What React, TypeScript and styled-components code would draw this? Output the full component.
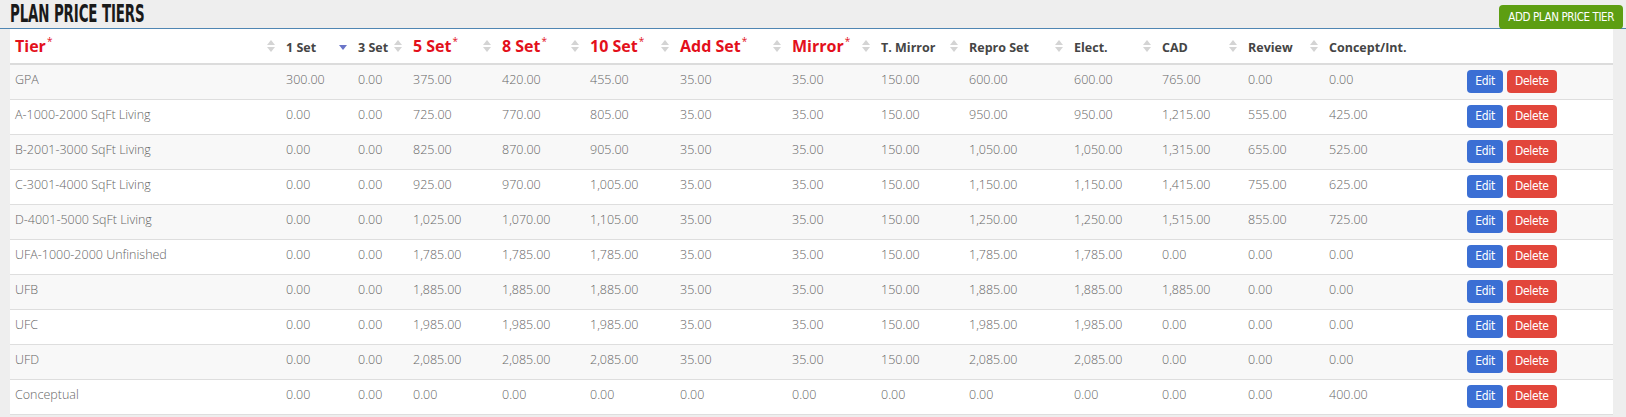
import React from 'react';
import styled, { createGlobalStyle } from 'styled-components';

const GlobalStyle = createGlobalStyle`
  html, body {
    margin: 0;
    padding: 0;
    background: #efefef;
  }
  body {
    font-family: "Open Sans", "Liberation Sans", sans-serif;
  }
`;

const Page = styled.div`
  width: 1626px;
  height: 417px;
  overflow: hidden;
  background: #eeeeee;
`;

const TopBar = styled.div`
  display: flex;
  align-items: flex-end;
  justify-content: space-between;
  height: 28px;
  padding: 0 3px 0 10px;
  border-bottom: 1px solid #4f86b3;
`;

const Title = styled.h1`
  margin: 0 0 2px;
  font-family: "DejaVu Sans Condensed", "Liberation Sans Narrow", sans-serif;
  font-weight: 700;
  font-size: 24px;
  line-height: 24px;
  color: #1a1a1a;
  transform: scaleX(0.62);
  transform-origin: left center;
  letter-spacing: -0.2px;
  white-space: nowrap;
`;

const AddButton = styled.button`
  height: 24px;
  margin-bottom: -1px;
  padding: 0 9px;
  border: none;
  border-radius: 4px;
  background: #5d9e12;
  color: #fff;
  font-family: "DejaVu Sans Condensed", "Liberation Sans Narrow", sans-serif;
  font-size: 11.5px;
  letter-spacing: -0.4px;
  cursor: pointer;
`;

const TableWrap = styled.div`
  margin: 0 13px 0 10px;
  background: #fff;
`;

const Table = styled.table`
  width: 1603px;
  table-layout: fixed;
  border-collapse: collapse;
`;

const HeadCell = styled.th<{ $w?: number }>`
  width: ${({ $w }) => ($w ? `${$w}px` : 'auto')};
  height: 35px;
  padding: 0 6px 0 5px;
  border-bottom: 2px solid #dcdcdc;
  text-align: left;
  vertical-align: middle;
  box-sizing: border-box;
`;

const HeadInner = styled.div`
  display: flex;
  align-items: center;
  justify-content: space-between;
`;

const HeadLabel = styled.span<{ $required?: boolean }>`
  font-weight: 700;
  font-size: ${({ $required }) => ($required ? '16px' : '12.5px')};
  color: ${({ $required }) => ($required ? '#e3101b' : '#454545')};
  white-space: nowrap;
  padding-top: ${({ $required }) => ($required ? '0' : '3px')};
`;

const Star = styled.sup`
  font-size: 10px;
  font-weight: 400;
  margin-left: 1px;
  position: relative;
  top: -1px;
`;

const Row = styled.tr<{ $striped: boolean }>`
  background: ${({ $striped }) => ($striped ? '#f8f8f8' : '#fff')};
`;

const Cell = styled.td<{ $center?: boolean }>`
  height: 35px;
  box-sizing: border-box;
  padding: 0 5px;
  border-bottom: 1px solid #dedede;
  font-size: 12.5px;
  font-weight: 300;
  line-height: 16px;
  color: #666;
  white-space: nowrap;
  text-align: ${({ $center }) => ($center ? 'center' : 'left')};
  vertical-align: middle;
  padding-bottom: ${({ $center }) => ($center ? '0' : '4px')};
`;

const ActionButton = styled.button<{ $variant: 'edit' | 'delete' }>`
  height: 23px;
  margin: 0 2px;
  padding: 0 8px;
  border: none;
  border-radius: 4px;
  background: ${({ $variant }) => ($variant === 'edit' ? '#3b6fd4' : '#e2463b')};
  color: #fff;
  font-family: "DejaVu Sans Condensed", "Liberation Sans Narrow", sans-serif;
  font-size: 12px;
  line-height: 23px;
  letter-spacing: -0.3px;
  vertical-align: middle;
  cursor: pointer;
`;

const SortIcon = ({ active }: { active?: boolean }) =>
  active ? (
    <svg width="8" height="14" viewBox="0 0 8 14">
      <path d="M0 6 L8 6 L4 11 Z" fill="#6a75c8" />
    </svg>
  ) : (
    <svg width="8" height="14" viewBox="0 0 8 14">
      <path d="M0 6 L8 6 L4 1 Z" fill="#d4d4d4" />
      <path d="M0 8 L8 8 L4 13 Z" fill="#d4d4d4" />
    </svg>
  );

type Column = { label: string; width: number; required?: boolean; active?: boolean };

const columns: Column[] = [
  { label: 'Tier', width: 271, required: true },
  { label: '1 Set', width: 72, active: true },
  { label: '3 Set', width: 55 },
  { label: '5 Set', width: 89, required: true },
  { label: '8 Set', width: 88, required: true },
  { label: '10 Set', width: 90, required: true },
  { label: 'Add Set', width: 112, required: true },
  { label: 'Mirror', width: 89, required: true },
  { label: 'T. Mirror', width: 88 },
  { label: 'Repro Set', width: 105 },
  { label: 'Elect.', width: 88 },
  { label: 'CAD', width: 86 },
  { label: 'Review', width: 81 },
  { label: 'Concept/Int.', width: 87 },
];

const rows: string[][] = [
  ['GPA', '300.00', '0.00', '375.00', '420.00', '455.00', '35.00', '35.00', '150.00', '600.00', '600.00', '765.00', '0.00', '0.00'],
  ['A-1000-2000 SqFt Living', '0.00', '0.00', '725.00', '770.00', '805.00', '35.00', '35.00', '150.00', '950.00', '950.00', '1,215.00', '555.00', '425.00'],
  ['B-2001-3000 SqFt Living', '0.00', '0.00', '825.00', '870.00', '905.00', '35.00', '35.00', '150.00', '1,050.00', '1,050.00', '1,315.00', '655.00', '525.00'],
  ['C-3001-4000 SqFt Living', '0.00', '0.00', '925.00', '970.00', '1,005.00', '35.00', '35.00', '150.00', '1,150.00', '1,150.00', '1,415.00', '755.00', '625.00'],
  ['D-4001-5000 SqFt Living', '0.00', '0.00', '1,025.00', '1,070.00', '1,105.00', '35.00', '35.00', '150.00', '1,250.00', '1,250.00', '1,515.00', '855.00', '725.00'],
  ['UFA-1000-2000 Unfinished', '0.00', '0.00', '1,785.00', '1,785.00', '1,785.00', '35.00', '35.00', '150.00', '1,785.00', '1,785.00', '0.00', '0.00', '0.00'],
  ['UFB', '0.00', '0.00', '1,885.00', '1,885.00', '1,885.00', '35.00', '35.00', '150.00', '1,885.00', '1,885.00', '1,885.00', '0.00', '0.00'],
  ['UFC', '0.00', '0.00', '1,985.00', '1,985.00', '1,985.00', '35.00', '35.00', '150.00', '1,985.00', '1,985.00', '0.00', '0.00', '0.00'],
  ['UFD', '0.00', '0.00', '2,085.00', '2,085.00', '2,085.00', '35.00', '35.00', '150.00', '2,085.00', '2,085.00', '0.00', '0.00', '0.00'],
  ['Conceptual', '0.00', '0.00', '0.00', '0.00', '0.00', '0.00', '0.00', '0.00', '0.00', '0.00', '0.00', '0.00', '400.00'],
];

export default function App() {
  return (
    <Page>
      <GlobalStyle />
      <TopBar>
        <Title>PLAN PRICE TIERS</Title>
        <AddButton>ADD PLAN PRICE TIER</AddButton>
      </TopBar>
      <TableWrap>
        <Table>
          <thead>
            <tr>
              {columns.map((col) => (
                <HeadCell key={col.label} $w={col.width}>
                  <HeadInner>
                    <HeadLabel $required={col.required}>
                      {col.label}
                      {col.required && <Star>*</Star>}
                    </HeadLabel>
                    <SortIcon active={col.active} />
                  </HeadInner>
                </HeadCell>
              ))}
              <HeadCell />
            </tr>
          </thead>
          <tbody>
            {rows.map((row, i) => (
              <Row key={row[0]} $striped={i % 2 === 0}>
                {row.map((value, j) => (
                  <Cell key={j}>{value}</Cell>
                ))}
                <Cell $center>
                  <ActionButton $variant="edit">Edit</ActionButton>
                  <ActionButton $variant="delete">Delete</ActionButton>
                </Cell>
              </Row>
            ))}
          </tbody>
        </Table>
      </TableWrap>
    </Page>
  );
}
